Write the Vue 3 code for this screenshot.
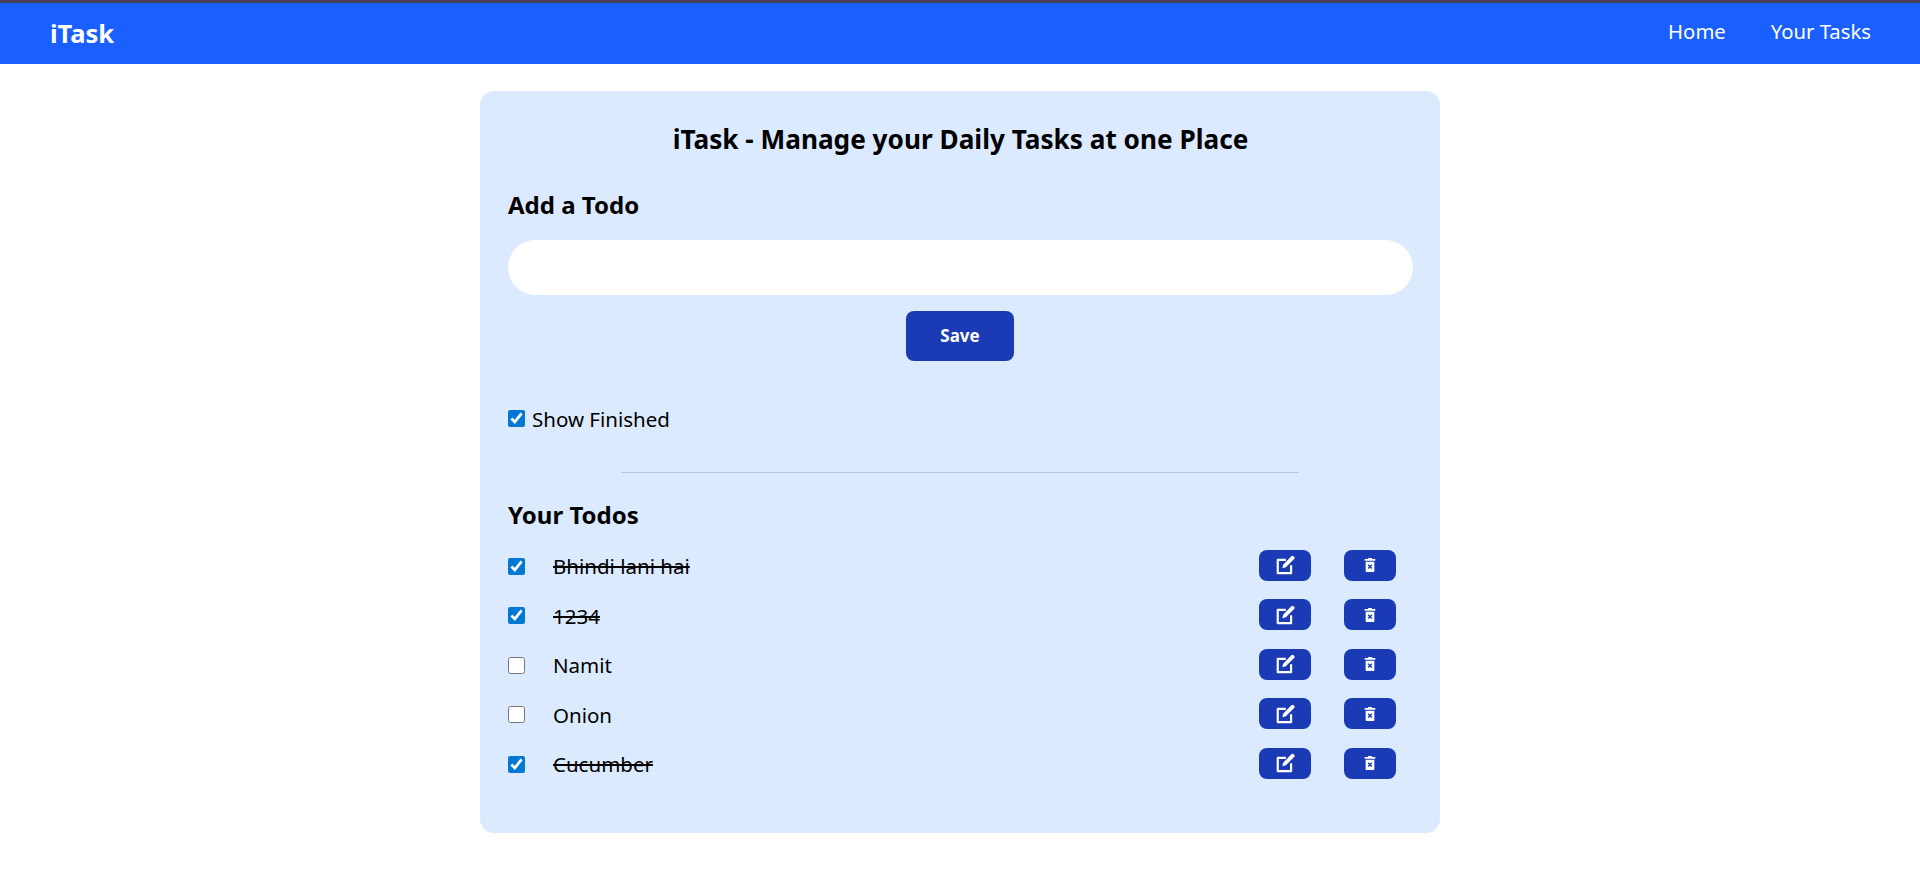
<script setup>
const todos = [
  { text: 'Bhindi lani hai', done: true },
  { text: '1234', done: true },
  { text: 'Namit', done: false },
  { text: 'Onion', done: false },
  { text: 'Cucumber', done: true },
]
</script>

<template>
  <nav class="nav">
    <span class="logo">iTask</span>
    <ul class="links"><li>Home</li><li>Your Tasks</li></ul>
  </nav>
  <main class="card">
    <h1>iTask - Manage your Daily Tasks at one Place</h1>
    <h2 class="add">Add a Todo</h2>
    <input class="field" type="text" />
    <button class="save">Save</button>
    <label class="finished"><input type="checkbox" checked /><span>Show Finished</span></label>
    <div class="rule"></div>
    <h2 class="yours">Your Todos</h2>
    <div class="list">
      <div v-for="t in todos" :key="t.text" class="row">
        <input type="checkbox" :checked="t.done" />
        <span class="text" :class="{ done: t.done }">{{ t.text }}</span>
        <button class="act edit">
          <svg viewBox="0 0 24 24" width="20" height="20" fill="#fff"><path d="M19.6 1.600a1.900 1.900 0 0 1 2.700 0l.6.6a1.900 1.900 0 0 1 0 2.700L13 14.800l-4.200 1.100 1-4.300z"/><path d="M3.500 4.500H13v2.600H4.600v13.300H18v-8h2.600v9.100c0 .8-.7 1.500-1.500 1.500H3.500c-.8 0-1.500-.7-1.500-1.500V6c0-.8.7-1.500 1.500-1.500z"/></svg>
        </button>
        <button class="act del">
          <svg viewBox="0 0 24 24" width="16" height="16" fill="#fff"><path fill-rule="evenodd" d="M9.500 1.500h5l1 1.500H20v2.500H4V3h4.500zM5.500 7h13v14.500c0 .6-.4 1-1 1h-11c-.6 0-1-.4-1-1zM10 11l-1.500 1.500L10.500 14.500l-2 2L10 18l2-2 2 2 1.500-1.500-2-2 2-2L14 11l-2 2z"/></svg>
        </button>
      </div>
    </div>
  </main>
</template>

<style>
body { margin: 0; background: #fff; }
</style>

<style scoped>
.nav { box-sizing: border-box; display: flex; justify-content: space-between; align-items: center; height: 64px; background: #1a5fff; color: #fff; border-top: 3px solid #473f55; padding: 0 49px 6px 50px; font-family: "Noto Sans", "Open Sans", sans-serif; }
.logo { font-size: 25.500px; font-weight: 700; margin-top: 5px; }
.links { display: flex; gap: 45px; list-style: none; margin: 0; padding: 0; font-size: 20.300px; }
.card { box-sizing: border-box; width: 960px; height: 742px; margin: 27px auto 0; padding: 30px 27px 0 28px; background: #dbeafe; border-radius: 14px; font-family: "Noto Sans", "Open Sans", sans-serif; color: #000; display: flex; flex-direction: column; }
h1 { margin: 0; font-size: 26.200px; line-height: 36px; font-weight: 700; text-align: center; }
h2 { margin: 0; font-size: 24px; line-height: 32px; font-weight: 700; }
.add { margin-top: 32px; }
.field { margin-top: 18.500px; height: 55px; border: 0; border-radius: 28px; background: #fff; padding: 0 20px; }
.save { align-self: center; margin: 16px 1px 0 0; width: 108px; height: 50px; background: #1a3bb5; color: #fff; border: 0; border-radius: 8px; font: 700 17px "Noto Sans", sans-serif; }
.finished { display: flex; align-items: center; gap: 7px; margin-top: 44px; font-size: 20.500px; line-height: 28px; }
.finished input, .row input { margin: 0; width: 17px; height: 17px; accent-color: #0078d4; }
.rule { width: 678px; height: 1px; background: #b8c6d8; align-self: center; margin: 39px 1px 0 0; }
.yours { margin-top: 26px; }
.list { margin-top: 20px; display: flex; flex-direction: column; gap: 18.600px; }
.row { display: flex; align-items: center; height: 31px; }
.text { margin-left: 28px; font-size: 20.500px; flex: 1; }
.text.done { text-decoration: line-through; }
.act { display: flex; align-items: center; justify-content: center; width: 52px; height: 31px; background: #1a3bb5; border: 0; border-radius: 8px; padding: 0; margin-bottom: 2px; }
.edit { margin-right: 33px; }
.del { margin-right: 17px; }
</style>
